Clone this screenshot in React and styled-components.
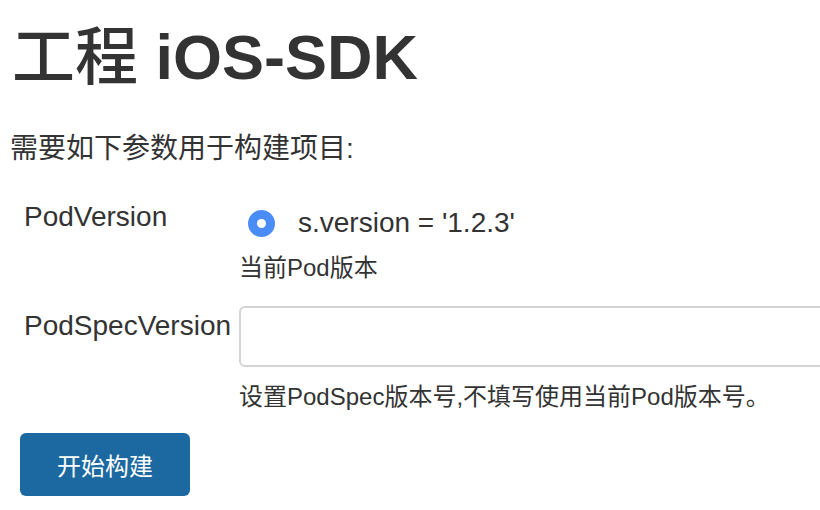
import React from "react";
import styled, { createGlobalStyle } from "styled-components";

const Global = createGlobalStyle`
  html, body { margin: 0; padding: 0; background: #fff; overflow: hidden; }
  body {
    font-family: "Liberation Sans", "Noto Sans CJK SC", sans-serif;
    color: #333;
  }
`;

const Page = styled.div`
  width: 820px;
  height: 510px;
  padding: 19px 0 0 12px;
  box-sizing: border-box;
  overflow: hidden;
`;

const Title = styled.h1`
  margin: 0;
  font-size: 63px;
  line-height: 76px;
  font-weight: 700;
  color: #333;
`;

const TitleCjk = styled.span`
  font-weight: 500;
`;

const Intro = styled.p`
  margin: 36px 0 0 -2px;
  font-size: 28px;
  line-height: 36px;
`;

const ParamTable = styled.div`
  margin-top: 32px;
  display: grid;
  grid-template-columns: 227px 1fr;
  row-gap: 22px;
`;

const Label = styled.div`
  padding-left: 12px;
  font-size: 28px;
  line-height: 36px;
  padding-top: ${(p) => p.$top || 0}px;
  white-space: nowrap;
`;

const Value = styled.div`
  display: flex;
  flex-direction: column;
  min-width: 0;
`;

const RadioRow = styled.label`
  display: flex;
  align-items: center;
  gap: 23px;
  padding-left: 9px;
  font-size: 28px;
  line-height: 36px;
  margin-top: 6px;
`;

const Radio = styled.input.attrs({ type: "radio" })`
  appearance: none;
  margin: 0;
  width: 27px;
  height: 27px;
  border-radius: 50%;
  background: #4b8df8;
  position: relative;
  flex: none;
  &::after {
    content: "";
    position: absolute;
    left: 50%;
    top: 50%;
    width: 9px;
    height: 9px;
    margin: -4.5px 0 0 -4.5px;
    border-radius: 50%;
    background: #fff;
  }
`;

const Help = styled.div`
  font-size: 24px;
  line-height: 32px;
  margin-top: ${(p) => p.$top || 0}px;
`;

const TextInput = styled.input`
  width: 640px;
  height: 61px;
  box-sizing: border-box;
  border: 2px solid #d3d3d3;
  border-radius: 6px;
  background: #fff;
  margin: 0;
  font-size: 24px;
  padding: 0 10px;
  outline: none;
`;

const BuildButton = styled.button`
  margin: 20px 0 0 8px;
  width: 170px;
  height: 63px;
  border: none;
  border-radius: 6px;
  background: #1b69a0;
  color: #fff;
  font-family: "Liberation Sans", "Noto Sans CJK SC", sans-serif;
  font-size: 24px;
  cursor: pointer;
`;

export default function App() {
  return (
    <>
      <Global />
      <Page>
        <Title>
          <TitleCjk>工程</TitleCjk> iOS-SDK
        </Title>
        <Intro>需要如下参数用于构建项目:</Intro>
        <ParamTable>
          <Label>PodVersion</Label>
          <Value>
            <RadioRow>
              <Radio checked readOnly name="podversion" />
              s.version = '1.2.3'
            </RadioRow>
            <Help $top={11}>当前Pod版本</Help>
          </Value>
          <Label $top={2}>PodSpecVersion</Label>
          <Value>
            <TextInput type="text" />
            <Help $top={14}>设置PodSpec版本号,不填写使用当前Pod版本号。</Help>
          </Value>
        </ParamTable>
        <BuildButton>开始构建</BuildButton>
      </Page>
    </>
  );
}
